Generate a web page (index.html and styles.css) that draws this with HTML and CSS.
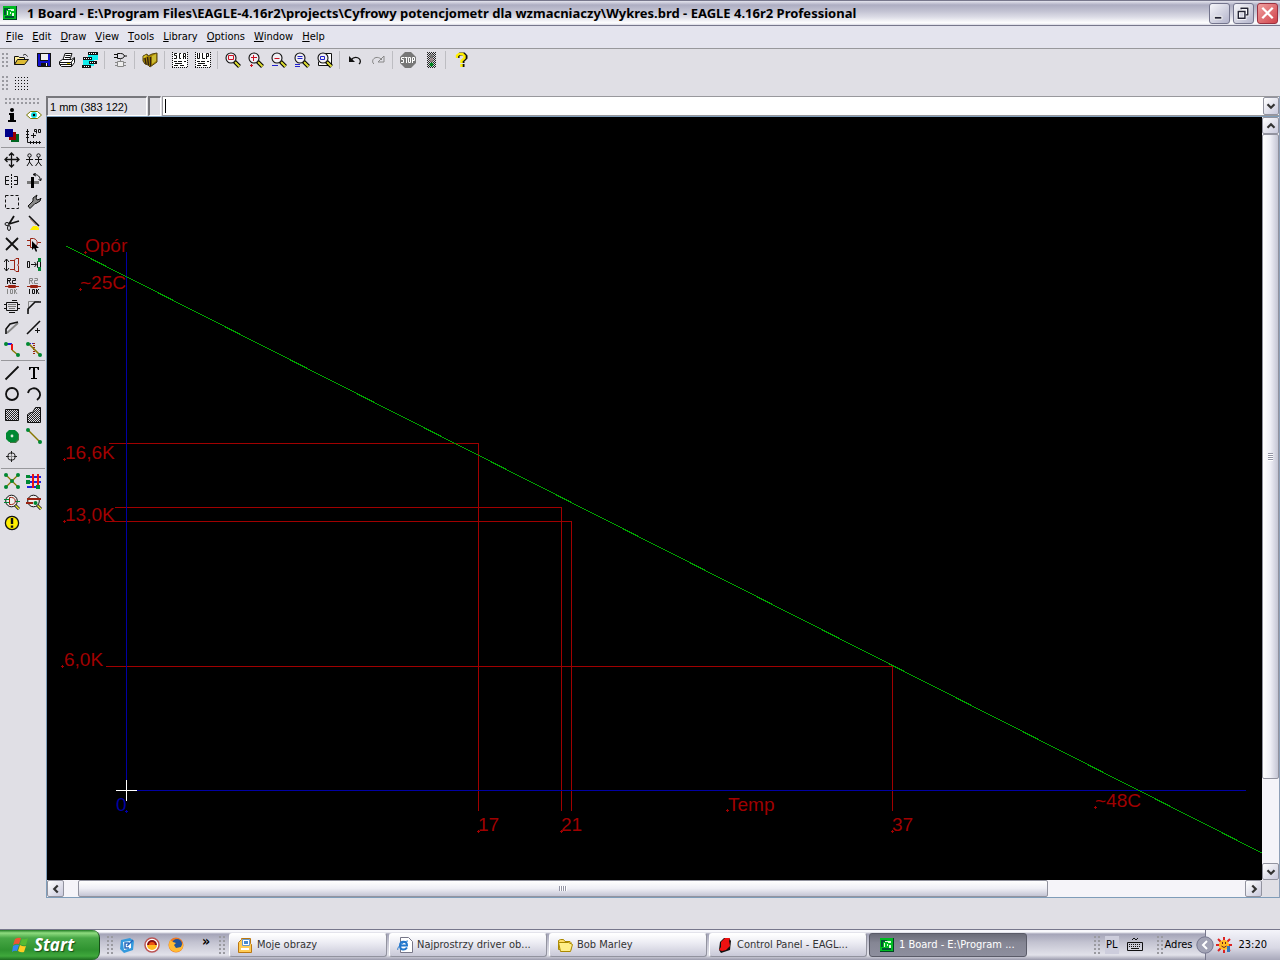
FILE: index.html
```html
<!DOCTYPE html>
<html lang="en">
<head>
<meta charset="utf-8">
<title>1 Board - EAGLE 4.16r2 Professional</title>
<link rel="stylesheet" href="styles.css">
</head>
<body>
<svg class="defs" aria-hidden="true">
  <defs>
    <pattern id="check" width="2" height="2" patternUnits="userSpaceOnUse"><path d="M0 0h1v1H0zM1 1h1v1H1z" fill="#222"/></pattern>
    <symbol id="board" viewBox="0 0 16 16"><path fill="#042" d="M1 1h14v14H1z"/><path fill="#0b2" d="M1 1h13v13H1z"/><path fill="#053" d="M2 3h6v2H4v5H2zM3 11h9v2H3z"/><path fill="#dfd" d="M6 4h6v1H6zM5 6h1v4H5zM9 5h3v1H9zM8 7h1v2H8zM10 8h2v3h-2z"/></symbol>
    <symbol id="lens" viewBox="0 0 16 16"><path d="M9.500 9.500l5 5" stroke="#000" stroke-width="4"/><path d="M10 10l4.500 4.500" stroke="#dd3" stroke-width="2"/><circle cx="6" cy="6" r="5" fill="#f1eff4" stroke="#111" stroke-width="1.100"/></symbol>
    <symbol id="node" viewBox="0 0 4 4"><circle cx="2" cy="2" r="2" fill="#083"/></symbol>
  </defs>
</svg>

<header class="titlebar">
  <svg class="i"><use href="#board"/></svg>
  <h1>1 Board - E:\Program Files\EAGLE-4.16r2\projects\Cyfrowy potencjometr dla wzmacniaczy\Wykres.brd - EAGLE 4.16r2 Professional</h1>
  <div class="winbtns">
    <button aria-label="Minimize"><svg viewBox="0 0 20 20"><path fill="#223" stroke="#fff" d="M4.500 13.500h8v3h-8z"/></svg></button>
    <button aria-label="Restore"><svg viewBox="0 0 20 20"><g fill="none" stroke="#fff" stroke-width="3"><path d="M7.500 6v-1h7v7h-2M4.500 8.500h7v7h-7z"/></g><g fill="none" stroke="#223"><path stroke-width="1.500" d="M7.500 6v-1h7v7h-2M4.500 8.500h7v7h-7z"/></g></svg></button>
    <button class="close" aria-label="Close"><svg viewBox="0 0 20 20"><path stroke="#fff" stroke-width="2.400" d="M4.500 4.500l11 11M15.500 4.500l-11 11"/></svg></button>
  </div>
</header>

<nav class="menu">
  <button><u>F</u>ile</button><button><u>E</u>dit</button><button><u>D</u>raw</button><button><u>V</u>iew</button><button><u>T</u>ools</button><button><u>L</u>ibrary</button><button><u>O</u>ptions</button><button><u>W</u>indow</button><button><u>H</u>elp</button>
</nav>

<div class="toolbar">
  <span class="grip"></span>
  <button aria-label="Open"><svg class="i" viewBox="0 0 16 16"><path fill="#fe9" stroke="#111" d="M1.500 12.500v-8h4l1 1h5v2"/><path fill="#db3" stroke="#111" d="M1.500 12.500l3-5h11l-4 5z"/><path fill="none" stroke="#111" d="M10 3.500c2-2 3-1 4.500 1"/></svg></button>
  <button aria-label="Save"><svg class="i" viewBox="0 0 16 16"><path fill="#111" d="M1 1h14v14H2l-1-1z"/><path fill="#11c" d="M2 2h2v7h8V2h2v12h-2v-3H5v3H2z"/><path fill="#eee" d="M5 2h7v6H5zM10 11h1v3h-1z"/></svg></button>
  <button aria-label="Print"><svg class="i" viewBox="0 0 16 16"><g fill="#fff" stroke="#111"><path d="M4 7.500l2-6h7l-2 6z"/><path d="M.500 9.500l3-2h9l3-2v5l-3 4h-10l-2-2z"/></g><path stroke="#111" d="M6.500 3.500h5M6 5.500h5M1 10.500h11.500M12.500 10.500v4M12 10.500l3-4M1 12.500h11"/><path stroke="#dc0" d="M8 11.500h3"/></svg></button>
  <button aria-label="Board"><svg class="i" viewBox="0 0 16 16"><path fill="#1ee" d="M6 3h10v5h-4v6H1V8h5z"/><path fill="#111" d="M6 0h10v3H6zM1 5h9v3H1zM7 9h8v3H7zM0 13h9v3H0z"/><path fill="#fff" d="M7 1h1v1H7zM9 1h1v1H9zM11 1h1v1h-1zM13 1h1v1h-1zM2 6h1v1H2zM4 6h1v1H4zM6 6h1v1H6zM8 6h1v1H8zM8 10h1v1H8zM10 10h1v1h-1zM12 10h1v1h-1zM2 14h1v1H2zM4 14h1v1H4zM6 14h1v1H6z"/></svg></button>
  <i></i>
  <button aria-label="Schematic"><svg class="i" viewBox="0 0 16 16"><g fill="none" stroke="#111"><path d="M5.500 1.500h3c5 0 5 5 0 5h-3zM2 2.500h3M2 5.500h3M12 4h3"/></g><g fill="#eee" stroke="#888"><path d="M5.500 9.500h6v5h-6zM3 10.500h2M3 13.500h2M12 10.500h2M12 13.500h2M8.500 7v2"/></g></svg></button>
  <i></i>
  <button aria-label="Use library"><svg class="i" viewBox="0 0 16 16"><path fill="#a80" stroke="#541" d="M1 4l4-2 1 2 4-2 5-1v9l-7 5-2-2-3-1-2-3z"/><path fill="#cb3" d="M10 4l4-2v7l-4 3z"/><path fill="#dc3" d="M1 5l3-2 1 1-3 2z"/><path stroke="#321" stroke-width="1.500" d="M3 6l1 6M5.500 5l1 8M8.500 5v9"/></svg></button>
  <i></i>
  <button aria-label="Run script"><svg class="i" viewBox="0 0 16 16"><path fill="#fff" d="M1 1h14v14H1z"/><path fill="none" stroke="#111" d="M5 1.500H2.500v2h2v3H2M9 1.500H7.500v5H9M11.500 7V1.500h2v3h-2M13.500 5v2M2 9.500h3m1 0h4m2 0h2M3 11.500h7M2 13.500h4m2 0h4"/><path fill="none" stroke="#111" stroke-dasharray="1 1" d="M.5 0v16M15.500 0v16M0 15.500h16"/></svg></button>
  <button aria-label="Run ULP"><svg class="i" viewBox="0 0 16 16"><path fill="#fff" d="M1 1h14v14H1z"/><path fill="none" stroke="#111" d="M2.500 1v5.500h2V1M7.500 1v5.500H10M11.500 7V1.500h2v3h-2M2 9.500h3m1 0h4m2 0h2M3 11.500h7M2 13.500h4m2 0h4"/><path fill="none" stroke="#111" stroke-dasharray="1 1" d="M.5 0v16M15.500 0v16M0 15.500h16"/></svg></button>
  <i></i>
  <button aria-label="Zoom to fit"><svg class="i" viewBox="0 0 16 16"><use href="#lens"/><path fill="none" stroke="#c12" d="M3.500 3.500h5v4h-5z"/></svg></button>
  <button aria-label="Zoom in"><svg class="i" viewBox="0 0 16 16"><use href="#lens"/><path stroke="#c12" d="M3 5.500h6M5.500 3v6M2 13.500h3M3.500 12v3"/></svg></button>
  <button aria-label="Zoom out"><svg class="i" viewBox="0 0 16 16"><use href="#lens"/><path stroke="#c12" d="M3.500 6.500h5"/><path stroke="#22c" d="M1 13.500h6"/></svg></button>
  <button aria-label="Redraw"><svg class="i" viewBox="0 0 16 16"><use href="#lens"/><path stroke="#22c" d="M3.500 4.500h5M3.500 6.500h5M1 12.500h5M1 14.500h5"/></svg></button>
  <button aria-label="Zoom select"><svg class="i" viewBox="0 0 16 16"><path fill="#fff" stroke="#111" d="M6.500 1.500h8v12h-13v-4"/><use href="#lens"/><path fill="none" stroke="#22c" d="M3.500 4.500h4v3h-4z"/></svg></button>
  <i></i>
  <button aria-label="Undo"><svg class="i" viewBox="0 0 16 16"><path fill="none" stroke="#111" stroke-width="1.300" d="M4 8c4-5 11-2 9 3l-1 1"/><path fill="#111" d="M2 4v6h6z"/></svg></button>
  <button aria-label="Redo" disabled><svg class="i" viewBox="0 0 16 16"><path fill="none" stroke="#888" d="M12 8C8 3 1 6 3 11l1 1M14 4v6H8z"/></svg></button>
  <i></i>
  <button aria-label="Stop" disabled><svg class="i" viewBox="0 0 16 16"><path fill="#777" d="M5 0h6l5 5v6l-5 5H5l-5-5V5z"/><path fill="none" stroke="#fff" d="M4 5.500H1.500v2h2v3H1M4.500 5.500h3M6.500 5.500V11M8.500 5.500h2v5h-2zM12.500 11V5.500h2v3h-2"/></svg></button>
  <button aria-label="Go" disabled><svg class="i" viewBox="0 0 16 16"><path fill="url(#check)" d="M4 0h9v16H4z"/><circle cx="8.500" cy="4" r="2" fill="#777"/><circle cx="8.500" cy="8" r="2" fill="#988"/><circle cx="8.500" cy="12.500" r="2" fill="#082"/></svg></button>
  <i></i>
  <button aria-label="Help"><svg class="i" viewBox="0 0 16 16"><path fill="none" stroke="#111" stroke-width="3" d="M5 6V4l2-2h4l2 2v2l-3 3v2m0 1v3"/><path fill="none" stroke="#fe0" stroke-width="2.400" d="M4 6V3.500L6 2h3.500l2 2v2l-3 3v2m0 1v3"/></svg></button>
</div>
<div class="toolbar params">
  <span class="grip"></span>
  <button aria-label="Grid"><svg class="i" viewBox="0 0 16 16"><g stroke="#111" stroke-dasharray="1 2"><path d="M2 1.500h14M2 4.500h14M2 7.500h14M2 10.500h14M2 13.500h14"/></g></svg></button>
</div>

<main class="work">
  <aside class="tools">
    <span class="hgrip"></span>
    <div class="group">
      <button aria-label="Info"><svg class="i" viewBox="0 0 16 16"><circle cx="8" cy="3" r="2"/><path d="M5 6h5v7h2v2H4v-2h2V8H5z"/></svg></button>
      <button aria-label="Show"><svg class="i" viewBox="0 0 16 16"><path fill="#fff" stroke="#770" d="M.5 8l4-3.500h7L15.500 8l-4 3.500h-7z"/><circle cx="8" cy="8" r="3" fill="#1dd"/><circle cx="8" cy="8" r="1.200"/></svg></button>
      <button aria-label="Display"><svg class="i" viewBox="0 0 16 16"><path fill="#062" d="M7 6h8v8H7z"/><path fill="#900" d="M5 4h7v8H5z"/><path fill="#008" d="M1 1h8v8H1z"/></svg></button>
      <button aria-label="Mark"><svg class="i" viewBox="0 0 16 16"><path fill="none" stroke="#111" d="M1.500 1v13.500H15M0 3.500h3M0 6.500h3M0 9.500h3M4.500 13v3M7.500 13v3M10.500 13v3M13.500 13v3M5 7.500h5M7.500 5v5M10.500 5.500V1.500h-2v2h2M12.500 1.500h2v3h-2z"/></svg></button>
    </div>
    <hr>
    <div class="group">
      <button aria-label="Move"><svg class="i" viewBox="0 0 16 16"><path stroke="#111" fill="none" stroke-width="1.300" d="M7.500 1v14M1 7.500h14M5 3.500L7.500 1 10 3.500M5 12.500L7.500 15l2.500-2.500M3.500 5L1 7.500 3.500 10M12.500 5L15 7.500 12.500 10"/></svg></button>
      <button aria-label="Copy"><svg class="i" viewBox="0 0 16 16"><g fill="none" stroke="#111"><circle cx="3.500" cy="3.500" r="1.700"/><circle cx="12.500" cy="3.500" r="1.700"/><path d="M3.500 5v5l-2.500 4M3.500 10l3 4M0 7.500h7M12.500 5v5l-3 4M12.500 10l3 4M9 7.500h7"/></g></svg></button>
      <button aria-label="Mirror"><svg class="i" viewBox="0 0 16 16"><g fill="none" stroke="#111"><path d="M5 3.500H1.500v8H5M1.500 7.500H5M10 3.500h3.500v8H10M10 7.500h3.500"/><path stroke-dasharray="2 1" d="M7.500 1v14"/></g></svg></button>
      <button aria-label="Rotate"><svg class="i" viewBox="0 0 16 16"><path fill="#777" d="M1 8h12v3H1z"/><path d="M5 4h3v11H5z"/><path fill="none" stroke="#111" d="M8 1.500c4 0 6 2 6.500 6M10 0L7 1.500 10 3M12.500 6l2 2 1-2.500"/></svg></button>
      <button aria-label="Group"><svg class="i" viewBox="0 0 16 16"><path fill="none" stroke="#111" stroke-dasharray="3 2" d="M1.500 1.500h13v13h-13z"/></svg></button>
      <button aria-label="Change"><svg class="i" viewBox="0 0 16 16"><path fill="#888" stroke="#111" d="M2 12l5-5V4l4-3-1 3 1 2 3-1 1-1-1 3-4 2.500H9L4 14.500z"/></svg></button>
      <button aria-label="Cut"><svg class="i" viewBox="0 0 16 16"><path stroke="#111" stroke-width="1.800" d="M5 9l5-8M5 9l10-3"/><g fill="none" stroke="#111"><ellipse cx="3" cy="9" rx="2" ry="1.500"/><ellipse cx="5" cy="13" rx="1.500" ry="2.500"/></g></svg></button>
      <button aria-label="Paste"><svg class="i" viewBox="0 0 16 16"><path stroke="#111" stroke-width="1.600" d="M3 1l10 10"/><path fill="#fe0" d="M7 11h4l2 2v2H4z"/><path stroke="#b98" d="M4 4l6 6"/></svg></button>
      <button aria-label="Delete"><svg class="i" viewBox="0 0 16 16"><path stroke="#111" stroke-width="1.800" d="M2 2l12 12M14 2L2 14"/></svg></button>
      <button aria-label="Add"><svg class="i" viewBox="0 0 16 16"><path fill="none" stroke="#921" d="M4.500 2.500v9h3c5-1 5-8 0-9zM1 4.500h3M1 9.500h3M12 6.500h3"/><path d="M6 5v9l2-2 2 4 1-1-1-3h3z"/></svg></button>
      <button aria-label="Pinswap"><svg class="i" viewBox="0 0 16 16"><path fill="none" stroke="#111" d="M2.500 2v12M0 5l2.500-3L5 5M0 11l2.500 3L5 11"/><path fill="none" stroke="#921" d="M6 3.500h4M6 12.500h4M15 1.500h-3l-1.500 1.500v10l1.500 1.500h3M14.500 2v5l-1 1 1 1v5"/></svg></button>
      <button aria-label="Replace"><svg class="i" viewBox="0 0 16 16"><g fill="none" stroke="#111"><path d="M1.500 4.500h2v6h-2zM5 7.500h5M8.500 5l2 2.500-2 2.500M11.500 4.500h3v6h-3z"/></g><path fill="#083" d="M12 1h3v4h-3zM12 10h3v4h-3z"/></svg></button>
      <button aria-label="Name"><svg class="i" viewBox="0 0 16 16"><path fill="none" stroke="#111" d="M3.500 6V.5h3v2h-3M5 3l2 3M8.500.5h3v2h-3v3H12"/><path fill="none" stroke="#921" d="M1 8.500h14M4.500 7.500h7v2h-7z"/><path fill="none" stroke="#888" d="M3.500 11v5M6.500 11.500h2v4h-2zM10.500 11v5M13 11l-2 2 2 3"/></svg></button>
      <button aria-label="Value"><svg class="i" viewBox="0 0 16 16"><path fill="none" stroke="#888" d="M3.500 6V.5h3v2h-3M5 3l2 3M8.500.5h3v2h-3v3H12"/><path fill="none" stroke="#921" d="M1 8.500h14M4.500 7.500h7v2h-7z"/><path fill="none" stroke="#111" d="M3.500 11v5M6.500 11.500h2v4h-2zM10.500 11v5M13 11l-2 2 2 3"/></svg></button>
      <button aria-label="Smash"><svg class="i" viewBox="0 0 16 16"><path fill="none" stroke="#111" d="M2.500 3.500h11v8h-11zM0 5.500h2M0 9.500h2M14 5.500h2M14 9.500h2M8 1.500h5M5 13.500h6"/><path fill="none" stroke="#777" d="M4 5.500h8M4 7.500h8M5 9.500h6"/></svg></button>
      <button aria-label="Miter"><svg class="i" viewBox="0 0 16 16"><path fill="none" stroke="#888" d="M2.500 12V2.500H13"/><path fill="none" stroke="#111" stroke-width="1.600" d="M2 15V10l7-7h6"/></svg></button>
      <button aria-label="Split"><svg class="i" viewBox="0 0 16 16"><path fill="none" stroke="#888" stroke-width="1.800" d="M3 13L14 3"/><path fill="none" stroke="#111" stroke-width="1.600" d="M2 14V9l4-5 8-2"/></svg></button>
      <button aria-label="Optimize"><svg class="i" viewBox="0 0 16 16"><path stroke="#111" stroke-width="1.600" d="M1 14L14 1"/><path stroke="#111" d="M9 10.500h5M11.500 8v5"/></svg></button>
      <button aria-label="Route"><svg class="i" viewBox="0 0 16 16"><path fill="none" stroke="#22d" stroke-width="2" d="M2 3h6"/><path stroke="#e11" stroke-width="2" d="M8 3v6"/><path stroke="#870" stroke-width="1.400" d="M8 9l6 5"/><use href="#node" x="0" y="1" width="4" height="4"/><use href="#node" x="12" y="12" width="4" height="4"/></svg></button>
      <button aria-label="Ripup"><svg class="i" viewBox="0 0 16 16"><path stroke="#22d" stroke-dasharray="1 1" d="M2 2.500h6"/><path stroke="#921" stroke-dasharray="1 1" stroke-width="2" d="M8 2v12"/><path stroke="#870" stroke-width="1.600" d="M2 2l12 12"/><use href="#node" x="0" y="1" width="4" height="4"/><use href="#node" x="12" y="12" width="4" height="4"/></svg></button>
    </div>
    <hr>
    <div class="group">
      <button aria-label="Wire"><svg class="i" viewBox="0 0 16 16"><path stroke="#111" stroke-width="1.800" d="M1.500 14.500l13-13"/></svg></button>
      <button aria-label="Text"><svg class="i" viewBox="0 0 16 16"><path d="M3 2h10v3h-1l-1-2H9v10h2v1H5v-1h2V3H5L4 5H3z"/></svg></button>
      <button aria-label="Circle"><svg class="i" viewBox="0 0 16 16"><circle cx="8" cy="8" r="6" fill="none" stroke="#111" stroke-width="1.800"/></svg></button>
      <button aria-label="Arc"><svg class="i" viewBox="0 0 16 16"><path fill="none" stroke="#111" stroke-width="1.800" d="M2 7c1-5 7-6 10-3s3 7-1 10"/></svg></button>
      <button aria-label="Rectangle"><svg class="i" viewBox="0 0 16 16"><path fill="url(#check)" stroke="#111" d="M1.500 2.500h13v11h-13z"/></svg></button>
      <button aria-label="Polygon"><svg class="i" viewBox="0 0 16 16"><path fill="url(#check)" stroke="#111" d="M1.500 15.500v-8l3-2h2l3-5h5v15z"/></svg></button>
      <button aria-label="Via"><svg class="i" viewBox="0 0 16 16"><path fill="#474" d="M6 3h6l3 3v6l-3 3H6z"/><path fill="#083" d="M5 2h6l3 3v6l-3 3H5l-3-3V5z"/><circle cx="8" cy="8" r="1.400" fill="#ded"/></svg></button>
      <button aria-label="Signal"><svg class="i" viewBox="0 0 16 16"><path stroke="#870" stroke-width="1.400" d="M2 2l12 12"/><use href="#node" x="0" y="0" width="4" height="4"/><use href="#node" x="12" y="12" width="4" height="4"/></svg></button>
      <button aria-label="Hole"><svg class="i" viewBox="0 0 16 16"><g fill="none" stroke="#222"><circle cx="7.500" cy="7.500" r="3.800"/><path d="M3 7.500h9M7.500 3v9" stroke="#888"/><path d="M7.500 2v3M7.500 10v3M2 7.500h3M10 7.500h3"/></g></svg></button>
    </div>
    <hr>
    <div class="group">
      <button aria-label="Ratsnest"><svg class="i" viewBox="0 0 16 16"><path stroke="#870" stroke-width="1.200" d="M2 2l12 12M14 2L2 14"/><use href="#node" x="0" y="0" width="4" height="4"/><use href="#node" x="12" y="0" width="4" height="4"/><use href="#node" x="0" y="12" width="4" height="4"/><use href="#node" x="12" y="12" width="4" height="4"/><use href="#node" x="6" y="6" width="4" height="4"/></svg></button>
      <button aria-label="Autorouter"><svg class="i" viewBox="0 0 16 16"><path stroke="#22d" stroke-width="2" d="M2 4h13M2 9h13M1 14h10"/><path stroke="#e11" stroke-width="2" d="M7 1v14M12 1v12"/><path fill="#083" d="M0 2h4v3H0zM0 7h4v4H0zM10 12h4v4h-4z"/></svg></button>
      <button aria-label="ERC"><svg class="i" viewBox="0 0 16 16"><path stroke="#111" stroke-width="3" d="M11 11l4 4"/><path stroke="#ee3" stroke-width="1.500" d="M11 11l4 4"/><circle cx="7.500" cy="7" r="5.800" fill="#eee" stroke="#111"/><path stroke="#083" d="M0 5.500h6M0 8.500h6M11 7.500h5"/><path fill="none" stroke="#921" d="M5.500 3.500h2c5 0 5 7 0 7h-2z"/></svg></button>
      <button aria-label="DRC"><svg class="i" viewBox="0 0 16 16"><path stroke="#111" stroke-width="3" d="M11 11l4 4"/><path stroke="#ee3" stroke-width="1.500" d="M11 11l4 4"/><circle cx="7.500" cy="7" r="5.800" fill="#eee" stroke="#111"/><path stroke="#921" stroke-width="2" d="M1 5h14M0 9h7"/><circle cx="9.500" cy="9" r="2" fill="#083"/></svg></button>
      <button aria-label="Errors"><svg class="i" viewBox="0 0 16 16"><circle cx="8" cy="8" r="6.600" fill="#fe0" stroke="#111" stroke-width="1.300"/><path stroke="#111" stroke-width="2.400" d="M8 3v6M8 10.500v2.200"/></svg></button>
    </div>
  </aside>

  <section class="editor">
    <div class="cmdrow">
      <output class="coords">1 mm (383 122)</output>
      <span class="cell"></span>
      <div class="combo">
        <input type="text" aria-label="Command line">
        <button class="sb" aria-label="Command history"><svg viewBox="0 0 16 16"><path d="M4 6l4 4 4-4"/></svg></button>
      </div>
    </div>
    <div class="view">
      <svg class="canvas" viewBox="47 117 1215 763" preserveAspectRatio="xMinYMin meet" role="img" aria-label="Board drawing">
        <g class="red">
          <path d="M109 443.500H478.500V811M115 507.500H561.500V811M105 521.500H571.500V811M106 666.500H892.500V811"/>
          <path d="M85.500 251v3M84 252.500h3M80.500 288v3M79 289.500h3M64.500 458v3M63 459.500h3M64.500 520v3M63 521.500h3M62.500 665v3M61 666.500h3M478.500 830v3M477 831.500h3M561.500 830v3M560 831.500h3M892.500 830v3M891 831.500h3M727.500 809v3M726 810.500h3M1095.500 806v3M1094 807.500h3"/>
        </g>
        <path class="blue" d="M126.500 252V790M126 790.500H1246M126.500 810v3M125 811.500h3"/>
        <path class="green" d="M66 246L1262 853"/>
        <path class="cursor" d="M126.500 780V801M116 790.500H137"/>
        <g class="label">
          <text x="85" y="252">Opór</text>
          <text x="80" y="289">~25C</text>
          <text x="65" y="459">16,6K</text>
          <text x="65" y="521">13,0K</text>
          <text x="64" y="666">6,0K</text>
          <text x="478" y="831">17</text>
          <text x="561" y="831">21</text>
          <text x="892" y="831">37</text>
          <text x="728" y="811">Temp</text>
          <text x="1095" y="807">~48C</text>
          <text class="zero" x="116" y="811">0</text>
        </g>
      </svg>
      <div class="scroll v">
        <button class="sb" aria-label="Scroll up"><svg viewBox="0 0 16 16"><path d="M4 10l4-4 4 4"/></svg></button>
        <span class="thumb"><b></b></span><span class="rest"></span>
        <button class="sb" aria-label="Scroll down"><svg viewBox="0 0 16 16"><path d="M4 6l4 4 4-4"/></svg></button>
      </div>
      <div class="scroll h">
        <button class="sb" aria-label="Scroll left"><svg viewBox="0 0 16 16"><path d="M10 4L6 8l4 4"/></svg></button>
        <span class="lead"></span><span class="thumb"><b></b></span><span class="rest"></span>
        <button class="sb" aria-label="Scroll right"><svg viewBox="0 0 16 16"><path d="M6 4l4 4-4 4"/></svg></button>
      </div>
    </div>
  </section>
</main>
<div class="status"></div>

<footer class="taskbar">
  <button class="start"><svg class="flag" viewBox="0 0 20 20"><path fill="#e53" d="M4 4q3-2 6-1L8 9q-3-1-6 1z"/><path fill="#5b3" d="M11 4q3 1 6-1l-2 7q-3 1-6-1z"/><path fill="#38e" d="M2 11q3-2 6-1l-2 6q-3-1-5 1z"/><path fill="#fc2" d="M9 10q3 2 6 1l-2 6q-3 1-6-1z"/></svg>Start</button>
  <span class="grip tb"></span>
  <div class="quick">
    <button aria-label="Show desktop"><svg class="i" viewBox="0 0 16 16"><path fill="#39d" d="M1 3l9-2 4 3-1 9-9 3-4-4z"/><path fill="#fff" d="M3 5l8-1v7l-7 2z"/><path fill="none" stroke="#26b" stroke-width="1.500" d="M9 6H5v5h4M7 9l6-6"/></svg></button>
    <button aria-label="Media player"><svg class="i" viewBox="0 0 16 16"><circle cx="8" cy="8" r="7" fill="#fff" stroke="#b55" stroke-width="1.500"/><path fill="#811" d="M3 8a5 5 0 0110 0z"/><path fill="#fb2" d="M3 8h10a5 5 0 01-10 0z"/><path fill="#e51" d="M5 8a3 3 0 016 0z"/></svg></button>
    <button aria-label="Firefox"><svg class="i" viewBox="0 0 16 16"><circle cx="8" cy="8" r="7.500" fill="#e72"/><circle cx="9" cy="7" r="5" fill="#259"/><path fill="#fb3" d="M2 3l3 2 3 1-2 2 2 3 5-1 2-4c1 6-3 9-7 9S0 11 1 7z"/></svg></button>
    <span class="more">»</span>
  </div>
  <span class="grip tb"></span>
  <div class="tasks">
    <button><svg class="i" viewBox="0 0 16 16"><path fill="#fc5" stroke="#b71" d="M1.500 5.500l3-3v-1h9v5l1 1v8h-13z"/><path fill="#fff" stroke="#69c" d="M5.500 2.500h7v6h-7z"/><path fill="#48c" d="M7 4h4v3H7z"/><path fill="#fff" d="M4 11h8v2H4z"/></svg><span>Moje obrazy</span></button>
    <button><svg class="i" viewBox="0 0 16 16"><path fill="#fff" stroke="#778" d="M3.500.5h8l4 4v11h-12z"/><path fill="none" stroke="#27c" stroke-width="2" d="M3 8.500h7c0-5-7-5-7 0s5 5 7 2"/><path fill="none" stroke="#27c" d="M1 13c-2-2 6-9 10-9"/></svg><span>Najprostrzy driver ob...</span></button>
    <button><svg class="i" viewBox="0 0 16 16"><path fill="#fd6" stroke="#a80" d="M1.500 12.500V3.500l2-1h3l1.500 2h5l1 1v7z"/><path fill="#fe8" stroke="#a80" d="M3.500 14.500L1.500 5.500h10l4 2-2 7z"/></svg><span>Bob Marley</span></button>
    <button><svg class="i" viewBox="0 0 16 16"><path fill="#111" d="M3 5l4-4h5l2 3-1 9-9 3-2-3z"/><path fill="#e11" d="M4 5l4-4h5l-1 3 1 5-4 4-4 1-3-1 2-3z"/></svg><span>Control Panel - EAGL...</span></button>
    <button class="active"><svg class="i"><use href="#board"/></svg><span>1 Board - E:\Program ...</span></button>
  </div>
  <span class="grip tb"></span>
  <div class="lang"><span class="pl">PL</span><svg class="i" viewBox="0 0 16 16"><path fill="none" stroke="#111" d="M5 3l2-2 2 2 2-2M.5 5.500h15v8H.500z"/><path stroke="#111" stroke-dasharray="1 1" d="M2 7.500h12M2 9.500h12"/><path stroke="#111" d="M4 11.500h8"/></svg></div>
  <span class="grip tb"></span>
  <span class="addr">Adres</span>
  <div class="tray">
    <button class="hide" aria-label="Hide inactive icons"><svg viewBox="0 0 18 18"><circle cx="9" cy="9" r="8.200" fill="#a2a3b5" stroke="#777890"/><path fill="none" stroke="#fff" stroke-width="2" d="M11 5L7 9l4 4"/></svg></button>
    <svg class="i" viewBox="0 0 16 16"><path stroke="#d22" stroke-width="2" d="M8 0v16M0 8h16M2 2l12 12M14 2L2 14"/><circle cx="8" cy="8" r="5" fill="#fb2"/><path fill="none" stroke="#622" d="M5.500 9q2.500 3 5 0M6.500 5v2M9.500 5v2"/><path fill="#37b" d="M11 9h3v6h-3z"/></svg>
    <time>23:20</time>
  </div>
</footer>
</body>
</html>
```

FILE: styles.css
```css
* { box-sizing: border-box; }
body {
  margin: 0;
  min-height: 100vh;
  display: flex;
  flex-direction: column;
  background: #e0dfe5;
  color: #000;
  font: 11px/14px "DejaVu Sans Condensed", "DejaVu Sans", sans-serif;
}
button { border: 0; padding: 0; margin: 0; background: none; font: inherit; color: inherit; display: flex; align-items: center; justify-content: center; }
.defs { position: absolute; width: 0; height: 0; }
.i { width: 16px; height: 16px; flex: none; display: block; }

.titlebar {
  display: flex;
  align-items: center;
  height: 26px;
  padding: 0 2px;
  border-top: 1px solid #77778c;
  border-bottom: 1px solid #77778c;
  background: linear-gradient(#e4e4ee 0, #adadc2 4px, #c2c2d2 10px, #dcdce6 16px, #fff 22px, #d8d8e2 24px);
}
.titlebar h1 {
  flex: 1;
  min-width: 0;
  margin: 0 0 0 9px;
  overflow: hidden;
  white-space: nowrap;
  font: bold 13px/20px "Noto Sans", "Open Sans", sans-serif;
}
.winbtns { display: flex; gap: 3px; }
.winbtns button { width: 21px; height: 21px; border: 1px solid #73748c; border-radius: 3px; background: linear-gradient(135deg, #f6f6fa, #b3b4cb); }
.winbtns .close { border-color: #9a3040; background: linear-gradient(135deg, #f0a0a0, #d0424a); }
.winbtns svg { width: 20px; height: 20px; }

.menu { display: flex; gap: 9px; height: 23px; padding: 0 6px; border-bottom: 1px solid #98989c; background: #e4e4ee; }

.toolbar { display: flex; align-items: center; height: 22px; padding-left: 2px; }
.toolbar.params { height: 25px; }
.toolbar button { width: 23px; height: 23px; }
.toolbar > i { width: 1px; height: 18px; margin: 0 3px; background: #bdbdc2; }
.grip { width: 7px; height: 15px; background: radial-gradient(circle at 1px 1px, #9a9aa0 1px, transparent 1px) 0 0 / 4px 4px; }

.work { flex: 1; display: flex; }
.tools { width: 46px; padding: 2px 1px 0; display: flex; flex-direction: column; }
.hgrip { height: 6px; margin: 0 4px; background: radial-gradient(circle at 1px 1px, #9a9aa0 1px, transparent 1px) 0 0 / 4px 4px; }
.group { display: grid; grid-template-columns: 22px 22px; grid-auto-rows: 21px; }
.group button { width: 22px; height: 21px; }
.tools hr { width: 100%; height: 3px; margin: 0; border: solid #e0dfe5; border-width: 1px 0; background: #98989c; }

.editor { flex: 1; min-width: 0; display: flex; flex-direction: column; border-right: 1px solid #8fa0b8; }
.cmdrow { display: flex; height: 20px; gap: 1px; }
.coords { width: 101px; padding: 2px; font-family: "Liberation Sans", Arial, sans-serif; border: solid; border-color: #77777c #fff #fff #77777c; border-width: 2px 1px 1px 2px; white-space: nowrap; }
.cell { width: 13px; border: solid; border-color: #77777c #fff #fff #77777c; border-width: 2px 1px 1px 2px; }
.combo { flex: 1; display: flex; border: 1px solid #98989c; border-right: 0; background: #fff; }
.combo input { flex: 1; min-width: 0; border: 0; padding: 0 4px; font: inherit; outline: 0; background: linear-gradient(#000, #000) 2px 2px / 1px 14px no-repeat #fff; }
.combo .sb { width: 16px; height: 18px; }

.view { flex: 1; display: grid; grid-template-columns: minmax(0, 1fr) 17px; grid-template-rows: minmax(0, 1fr) 17px; border: 1px solid #7f9db9; border-right: 0; }
.canvas { width: 100%; height: 100%; min-height: 0; background: #000; display: block; }
.canvas path { fill: none; shape-rendering: crispEdges; }
.red { stroke: #a00000; }
.blue { stroke: #0000a4; }
.green { stroke: #00a000; }
.cursor { stroke: #fff; }
.label { fill: #a00000; stroke: none; font: 19px "Liberation Sans", Arial, sans-serif; }
.label .zero { fill: #0000a4; }

.scroll { display: flex; background: #f5f4f9; }
.scroll.v { flex-direction: column; }
.sb { width: 17px; height: 17px; flex: none; border: 1px solid #92939f; border-radius: 2px; background: linear-gradient(135deg, #fff, #c9c9dc); }
.sb svg { width: 14px; height: 14px; fill: none; stroke: #333; stroke-width: 2.500; }
.thumb { display: flex; align-items: center; justify-content: center; border: 1px solid #92939f; border-radius: 2px; }
.v .thumb { flex: 644; background: linear-gradient(90deg, #fff, #eeeef5 50%, #c4c5d4); }
.v .rest { flex: 84; }
.h .lead { flex: 14; }
.h .thumb { flex: 970; background: linear-gradient(#fff, #eeeef5 50%, #c4c5d4); }
.h .rest { flex: 197; }
.h .thumb b { width: 8px; height: 5px; background: repeating-linear-gradient(90deg, #9394a4 0 1px, #fff 1px 2px); }
.v .thumb b { width: 5px; height: 8px; background: repeating-linear-gradient(#9394a4 0 1px, #fff 1px 2px); }

.status { height: 31px; }

.taskbar {
  display: flex;
  align-items: center;
  height: 31px;
  border-top: 1px solid #77778c;
  background: linear-gradient(#f8f8fc 0, #f8f8fc 2px, #a4a4b8 4px, #c2c2d0 12px, #e2e2ea 25px, #9a9aac 30px);
}
.start {
  width: 100px;
  height: 30px;
  padding-right: 14px;
  gap: 3px;
  border-radius: 0 8px 8px 0;
  border-right: 1px solid #164f18;
  background: linear-gradient(#1f7a22 0, #8fdc80 3px, #48a846 8px, #2f9330 20px, #3fa83c 26px, #1d6a20);
  color: #fff;
  font: italic bold 17px/22px "Open Sans", "Noto Sans", sans-serif;
  text-shadow: 1px 1px 1px #164f18;
}
.flag { width: 20px; height: 20px; }
.grip.tb { margin: 0 0 0 7px; width: 6px; height: 18px; }
.quick { display: flex; align-items: center; width: 99px; padding-left: 7px; gap: 8px; }
.more { margin: 0 0 9px 10px; font: bold 14px/14px "DejaVu Sans Condensed", sans-serif; }
.tasks { flex: 1; display: grid; grid-template-columns: repeat(5, minmax(0, 158px)); gap: 2px; margin-left: 4px; }
.tasks button { height: 24px; padding: 0 7px; gap: 4px; justify-content: flex-start; border: 1px solid #92939f; border-top-color: #fff; border-left-color: #fff; border-radius: 3px; background: linear-gradient(#fff, #ececf3 40%, #c9c9d8); color: #333; }
.tasks span { overflow: hidden; white-space: nowrap; }
.tasks .active { padding-left: 9px; border-color: #5a5b68; background: linear-gradient(#6a6b78, #858694 40%, #8e8f9e); color: #fff; }
.lang { display: flex; align-items: center; gap: 8px; margin: 0 7px 0 5px; }
.pl { padding: 2px 1px; background: #cdcddc; }
.addr { margin: 0 4px 0 2px; }
.tray { display: flex; align-items: center; gap: 2px; height: 30px; padding-right: 13px; background: linear-gradient(90deg, transparent 9px, #77778c 9px 10px, transparent 10px), linear-gradient(#f4f4fa, #d8d8e4 60%, #a8a8ba) 10px 0 no-repeat; }
.tray time { margin-left: 4px; }
.hide svg { width: 18px; height: 18px; }
```
